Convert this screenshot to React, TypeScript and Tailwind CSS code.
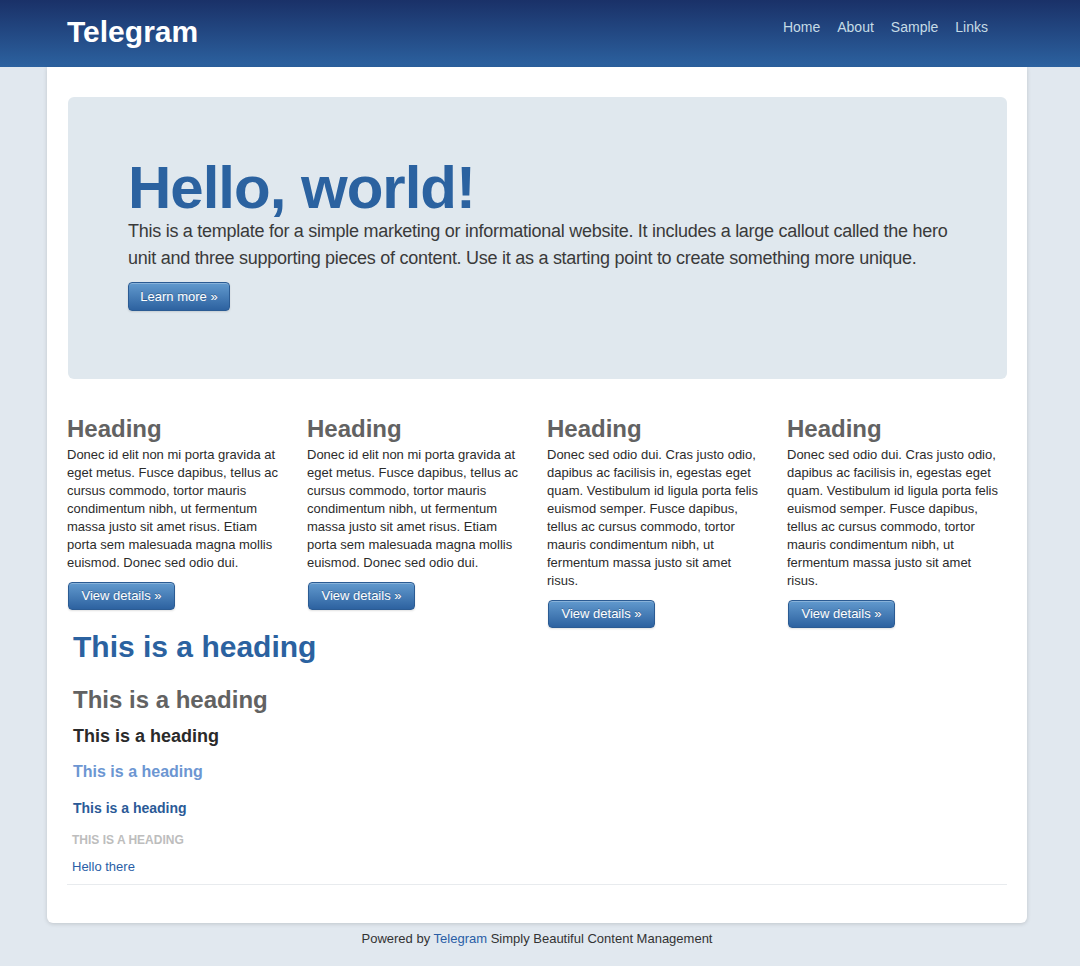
import type { ReactNode } from 'react'

const columns = [
  {
    title: 'Heading',
    text: 'Donec id elit non mi porta gravida at eget metus. Fusce dapibus, tellus ac cursus commodo, tortor mauris condimentum nibh, ut fermentum massa justo sit amet risus. Etiam porta sem malesuada magna mollis euismod. Donec sed odio dui.',
  },
  {
    title: 'Heading',
    text: 'Donec id elit non mi porta gravida at eget metus. Fusce dapibus, tellus ac cursus commodo, tortor mauris condimentum nibh, ut fermentum massa justo sit amet risus. Etiam porta sem malesuada magna mollis euismod. Donec sed odio dui.',
  },
  {
    title: 'Heading',
    text: 'Donec sed odio dui. Cras justo odio, dapibus ac facilisis in, egestas eget quam. Vestibulum id ligula porta felis euismod semper. Fusce dapibus, tellus ac cursus commodo, tortor mauris condimentum nibh, ut fermentum massa justo sit amet risus.',
  },
  {
    title: 'Heading',
    text: 'Donec sed odio dui. Cras justo odio, dapibus ac facilisis in, egestas eget quam. Vestibulum id ligula porta felis euismod semper. Fusce dapibus, tellus ac cursus commodo, tortor mauris condimentum nibh, ut fermentum massa justo sit amet risus.',
  },
]

const navLinks = ['Home', 'About', 'Sample', 'Links']

const BlueButton = ({ children, className }: { children: ReactNode; className: string }) => (
  <a
    href="#"
    className={
      'flex items-center justify-center rounded-[4px] border border-[#2b5b93] bg-linear-to-b from-[#629ace] to-[#2d62a0] text-[13px] text-white shadow-[inset_0_1px_0_rgba(255,255,255,0.25),0_1px_2px_rgba(0,0,0,0.12)] [text-shadow:0_-1px_0_rgba(0,0,0,0.25)] ' +
      className
    }
  >
    {children}
  </a>
)

export default function App() {
  return (
    <div className="min-h-[966px] bg-[#e1e8ef] font-['Liberation_Sans',Arial,sans-serif] text-[#333]">
      <header className="h-[67px] bg-linear-to-b from-[#1a3168] to-[#2c62a0]">
        <div className="ml-[67px] flex w-[921px] items-start justify-between">
          <a href="#" className="mt-[14px] text-[30px] leading-[36px] font-bold text-white">
            Telegram
          </a>
          <nav className="mt-[17px] flex gap-[17px] text-[14px] leading-[20px] text-[#c6dce6]">
            {navLinks.map((link) => (
              <a key={link} href="#">
                {link}
              </a>
            ))}
          </nav>
        </div>
      </header>

      <main className="ml-[47px] w-[980px] rounded-b-[6px] bg-white px-[20px] pt-[30px] pb-[38px] shadow-[0_1px_4px_rgba(0,0,0,0.15)]">
        {/* hero */}
        <section className="ml-px h-[282px] rounded-[6px] bg-[#e0e8ee] px-[60px] pt-[61px]">
          <h1 className="text-[60px] leading-[60px] font-bold tracking-[-1px] text-[#2b62a0]">
            Hello, world!
          </h1>
          <p className="text-[18px] leading-[27px] tracking-[-0.27px] whitespace-nowrap text-[#3a3a3a]">
            This is a template for a simple marketing or informational website. It includes a large callout called the hero
            <br />
            unit and three supporting pieces of content. Use it as a starting point to create something more unique.
          </p>
          <BlueButton className="mt-[10px] h-[29px] w-[102px]">Learn more »</BlueButton>
        </section>

        {/* columns */}
        <div className="mt-[36px] grid grid-cols-4 items-start gap-[20px]">
          {columns.map((col, i) => (
            <div key={i}>
              <h2 className="text-[24px] leading-[28px] font-bold text-[#626262]">{col.title}</h2>
              <p className="mt-[3px] pr-[5px] text-[13px] leading-[18px] text-[#2b2b2b]">{col.text}</p>
              <BlueButton className="mt-[10px] ml-px h-[28px] w-[107px]">View details »</BlueButton>
            </div>
          ))}
        </div>

        {/* heading samples */}
        <div className="mt-[1px] pl-[6px]">
          <h1 className="text-[30px] leading-[36px] font-bold text-[#2b62a0]">This is a heading</h1>
          <h2 className="mt-[17px] text-[24px] leading-[36px] font-bold text-[#626262]">This is a heading</h2>
          <h3 className="mt-[6px] text-[18px] leading-[24px] font-bold text-[#2a2a2a]">This is a heading</h3>
          <h4 className="mt-[14px] text-[16px] leading-[20px] font-bold text-[#6c96d2]">This is a heading</h4>
          <h5 className="mt-[17px] text-[14px] leading-[18px] font-bold text-[#2b5a97]">This is a heading</h5>
          <h6 className="mt-[15px] -ml-px text-[12px] leading-[16px] font-bold text-[#bdbdbd] uppercase">
            This is a heading
          </h6>
          <a href="#" className="mt-[10px] -ml-px block text-[13px] leading-[18px] text-[#2a5ea6]">
            Hello there
          </a>
        </div>

        <hr className="mt-[8px] border-0 border-t border-[#e8ebee]" />
      </main>

      <footer className="ml-[47px] w-[980px] pt-[7px] text-center text-[13px] leading-[18px] text-[#333]">
        Powered by{' '}
        <a href="#" className="text-[#2a5ea6]">
          Telegram
        </a>{' '}
        Simply Beautiful Content Management
      </footer>
    </div>
  )
}
